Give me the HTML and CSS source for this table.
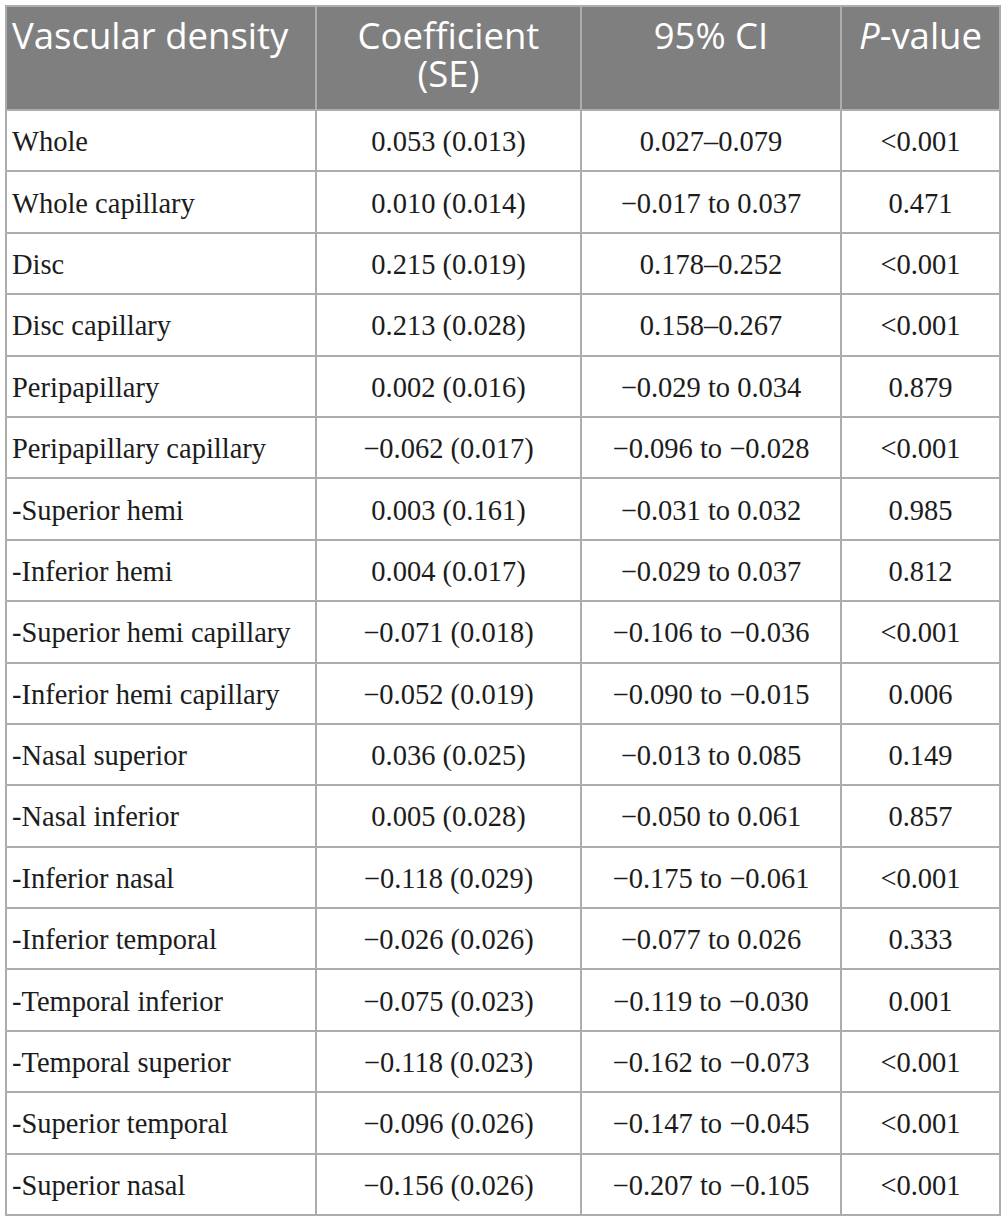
FILE: index.html
```html
<!DOCTYPE html>
<html lang="en">
<head>
    <meta charset="UTF-8" />
    <title>Vascular density</title>
    <link rel="stylesheet" href="styles.css">
</head>
<body>
<table class="results">
    <colgroup>
        <col class="c-name">
        <col class="c-coef">
        <col class="c-ci">
        <col class="c-p">
    </colgroup>
    <thead>
        <tr>
            <th class="left">Vascular density</th>
            <th>Coefficient (SE)</th>
            <th>95% CI</th>
            <th><i>P</i>-value</th>
        </tr>
    </thead>
    <tbody>
        <tr><td class="left">Whole</td><td>0.053 (0.013)</td><td>0.027–0.079</td><td>&lt;0.001</td></tr>
        <tr><td class="left">Whole capillary</td><td>0.010 (0.014)</td><td>−0.017 to 0.037</td><td>0.471</td></tr>
        <tr><td class="left">Disc</td><td>0.215 (0.019)</td><td>0.178–0.252</td><td>&lt;0.001</td></tr>
        <tr><td class="left">Disc capillary</td><td>0.213 (0.028)</td><td>0.158–0.267</td><td>&lt;0.001</td></tr>
        <tr><td class="left">Peripapillary</td><td>0.002 (0.016)</td><td>−0.029 to 0.034</td><td>0.879</td></tr>
        <tr><td class="left">Peripapillary capillary</td><td>−0.062 (0.017)</td><td>−0.096 to −0.028</td><td>&lt;0.001</td></tr>
        <tr><td class="left">-Superior hemi</td><td>0.003 (0.161)</td><td>−0.031 to 0.032</td><td>0.985</td></tr>
        <tr><td class="left">-Inferior hemi</td><td>0.004 (0.017)</td><td>−0.029 to 0.037</td><td>0.812</td></tr>
        <tr><td class="left">-Superior hemi capillary</td><td>−0.071 (0.018)</td><td>−0.106 to −0.036</td><td>&lt;0.001</td></tr>
        <tr><td class="left">-Inferior hemi capillary</td><td>−0.052 (0.019)</td><td>−0.090 to −0.015</td><td>0.006</td></tr>
        <tr><td class="left">-Nasal superior</td><td>0.036 (0.025)</td><td>−0.013 to 0.085</td><td>0.149</td></tr>
        <tr><td class="left">-Nasal inferior</td><td>0.005 (0.028)</td><td>−0.050 to 0.061</td><td>0.857</td></tr>
        <tr><td class="left">-Inferior nasal</td><td>−0.118 (0.029)</td><td>−0.175 to −0.061</td><td>&lt;0.001</td></tr>
        <tr><td class="left">-Inferior temporal</td><td>−0.026 (0.026)</td><td>−0.077 to 0.026</td><td>0.333</td></tr>
        <tr><td class="left">-Temporal inferior</td><td>−0.075 (0.023)</td><td>−0.119 to −0.030</td><td>0.001</td></tr>
        <tr><td class="left">-Temporal superior</td><td>−0.118 (0.023)</td><td>−0.162 to −0.073</td><td>&lt;0.001</td></tr>
        <tr><td class="left">-Superior temporal</td><td>−0.096 (0.026)</td><td>−0.147 to −0.045</td><td>&lt;0.001</td></tr>
        <tr><td class="left">-Superior nasal</td><td>−0.156 (0.026)</td><td>−0.207 to −0.105</td><td>&lt;0.001</td></tr>
    </tbody>
</table>
</body>
</html>
```

FILE: styles.css
```css
body {
    margin: 5px 0 0 5px;
    background: #fff;
}
.results {
    border-collapse: collapse;
    width: 994px;
    table-layout: fixed;
    font-family: "Liberation Serif", serif;
    font-size: 28.5px;
    color: #1c1c1c;
}
.c-name { width: 310px; }
.c-coef { width: 265px; }
.c-ci { width: 260px; }
.c-p { width: 159px; }
.results th,
.results td {
    border: 2px solid #adadad;
    text-align: center;
    padding: 0 5px;
}
.results th {
    background: #7f7f7f;
    color: #fff;
    font-family: "Open Sans", sans-serif;
    font-weight: 400;
    font-size: 36.5px;
    line-height: 38px;
    height: 104px;
    vertical-align: top;
    padding-top: 9px;
    box-sizing: border-box;
}
.results td {
    height: 56.4px;
    padding-top: 3px;
}
.results .left {
    text-align: left;
}
```
